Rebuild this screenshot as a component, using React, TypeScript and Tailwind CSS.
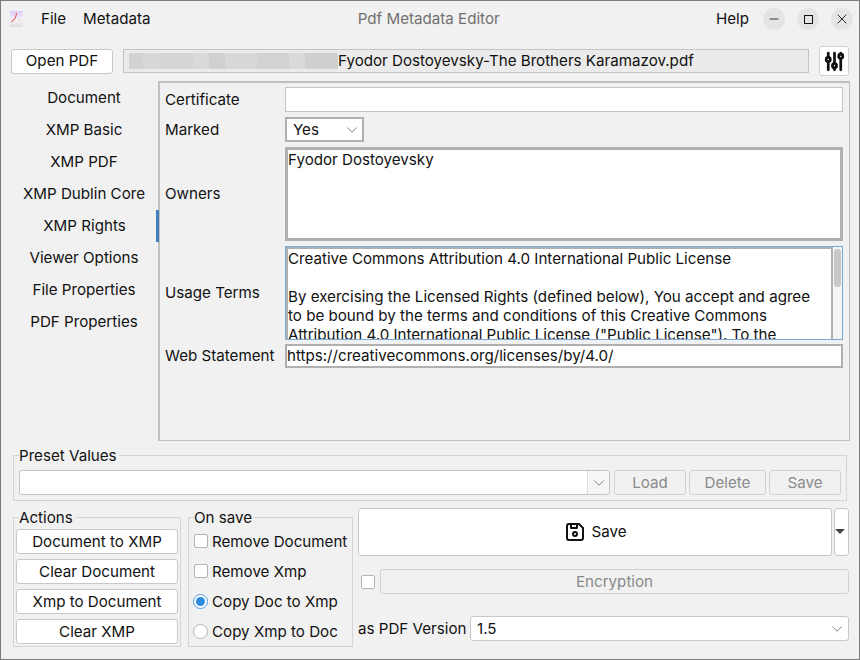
import React from "react";
import { TbAdjustments, TbDeviceFloppy } from "react-icons/tb";
import { ChevronDown, Minus, X } from "lucide-react";

const tabs = [
  "Document",
  "XMP Basic",
  "XMP PDF",
  "XMP Dublin Core",
  "XMP Rights",
  "Viewer Options",
  "File Properties",
  "PDF Properties",
];

const actions = ["Document to XMP", "Clear Document", "Xmp to Document", "Clear XMP"];

// blurred-out folder part of the path
const blurBlocks = [
  ["w-[14px]", "bg-[#d3d3d3]"],
  ["w-[18px]", "bg-[#d8d8d8]"],
  ["w-[32px]", "bg-[#d5d5d5]"],
  ["w-[16px]", "bg-[#dadada]"],
  ["w-[16px]", "bg-[#d0d0d0]"],
  ["w-[32px]", "bg-[#d8d8d8]"],
  ["w-[32px]", "bg-[#d2d2d2]"],
  ["w-[16px]", "bg-[#dadada]"],
  ["w-[33px]", "bg-[#cfcfcf]"],
];

const WinButton = ({ children }: { children: React.ReactNode }) => (
  <div className="flex h-[22px] w-[22px] items-center justify-center rounded-full bg-[#e4e4e4] text-[#1a1a1a]">
    {children}
  </div>
);

const PushButton = ({ label, className = "" }: { label: string; className?: string }) => (
  <button className={`flex h-[25px] items-center justify-center rounded-[3px] border border-[#c8c8c8] bg-white text-[#111] ${className}`}>
    {label}
  </button>
);

const DisabledButton = ({ label, className = "" }: { label: string; className?: string }) => (
  <button className={`flex h-[25px] items-center justify-center rounded-[3px] border border-[#d2d2d2] bg-[#f1f1f1] text-[#8a8a8a] ${className}`}>
    {label}
  </button>
);

const Check = ({ label }: { label: string }) => (
  <div className="flex h-[30px] items-center gap-[4px] pl-[5px]">
    <div className="h-[14px] w-[14px] rounded-[2px] border border-[#b4b4b4] bg-white" />
    <span className="mt-[2px] whitespace-nowrap">{label}</span>
  </div>
);

const Radio = ({ label, on }: { label: string; on?: boolean }) => (
  <div className="flex h-[30px] items-center gap-[4px] pl-[4px]">
    {on ? (
      <div className="flex h-[15px] w-[15px] items-center justify-center rounded-full border border-[#4a9ae0] bg-white">
        <div className="h-[9px] w-[9px] rounded-full bg-[#2f8ae0]" />
      </div>
    ) : (
      <div className="h-[15px] w-[15px] rounded-full border border-[#b4b4b4] bg-white" />
    )}
    <span className="mt-[2px] whitespace-nowrap">{label}</span>
  </div>
);

const FormRow = ({ label, children, className = "" }: { label: string; children: React.ReactNode; className?: string }) => (
  <div className={`flex items-center ${className}`}>
    <span className="w-[120px] shrink-0">{label}</span>
    {children}
  </div>
);

export default function App() {
  return (
    <div
      className="flex h-[660px] w-[860px] flex-col overflow-hidden border border-[#7c7c7c] bg-[#f1f1f1] text-[15.15px] leading-[20px] text-[#111]"
      style={{ fontFamily: 'Inter, "Noto Sans", sans-serif' }}
    >
      {/* title bar */}
      <div className="flex h-[36px] shrink-0 items-center pl-[9px] pr-[6px]">
        <svg width="14" height="17" viewBox="0 0 14 17" className="shrink-0">
          <defs>
            <linearGradient id="ic" x1="0" y1="0" x2="0" y2="1">
              <stop offset="0" stopColor="#dccbf5" />
              <stop offset="0.55" stopColor="#f6f2f8" />
              <stop offset="1" stopColor="#dfdfdc" />
            </linearGradient>
          </defs>
          <rect width="13" height="16" fill="url(#ic)" />
          <path d="M1.5 11 L3 9 L4.5 8.5 L6 5 L6.5 2" fill="none" stroke="#e0504f" strokeWidth="1" />
          <circle cx="9.5" cy="9" r="0.8" fill="#eeb070" />
        </svg>
        <span className="ml-[17px]">File</span>
        <span className="ml-[17px]">Metadata</span>
        <span className="flex-1 pr-[9px] text-center text-[#707070]">Pdf Metadata Editor</span>
        <span className="mr-[14px]">Help</span>
        <div className="flex gap-[12px]">
          <WinButton><Minus size={14} strokeWidth={1.5} /></WinButton>
          <WinButton><div className="h-[9px] w-[9px] border-[1.5px] border-[#111]" /></WinButton>
          <WinButton><X size={16} strokeWidth={1.4} /></WinButton>
        </div>
      </div>

      {/* file row */}
      <div className="mt-[9px] flex h-[30px] shrink-0 items-center pl-[10px] pr-[10px]">
        <PushButton label="Open PDF" className="h-[24px] w-[102px]" />
        <div className="ml-[10px] flex h-[24px] w-[686px] items-center border border-[#c4c4c4] bg-[#ebebeb] pl-[5px]">
          <div className="flex h-[16px] w-[209px] shrink-0">
            {blurBlocks.map(([w, c], i) => (
              <div key={i} className={`h-full ${w} ${c}`} />
            ))}
          </div>
          <span className="whitespace-nowrap">Fyodor Dostoyevsky-The Brothers Karamazov.pdf</span>
        </div>
        <button className="ml-[10px] flex h-[30px] w-[30px] items-center justify-center rounded-[3px] border border-[#d0d0d0] bg-white text-[#111]">
          <TbAdjustments size={25} strokeWidth={2.6} />
        </button>
      </div>

      {/* tabs + panel */}
      <div className="mt-[5px] flex h-[360px] shrink-0 pr-[9px]">
        <div className="flex w-[157px] shrink-0 flex-col pt-[1px]">
          {tabs.map((t) => (
            <div
              key={t}
              className={`flex h-[32px] items-center justify-center pl-[12px] ${t === "XMP Rights" ? "relative z-10 -mr-[1px] border-r-[3px] border-[#3f7fbf]" : "pr-[3px]"}`}
            >
              {t}
            </div>
          ))}
        </div>
        <div className="flex flex-1 flex-col border-t-2 border-l-2 border-r border-b border-[#c0c0c0] pl-[5px] pr-[6px] pt-[4px]">
          <FormRow label="Certificate" className="h-[25px]">
            <div className="h-full flex-1 border border-[#c4c4c4] bg-white" />
          </FormRow>
          <FormRow label="Marked" className="mt-[5px] h-[25px]">
            <div className="flex h-full w-[79px] items-center justify-between border-2 border-[#b0b0b0] bg-white pl-[6px] pr-[1px]">
              <span>Yes</span>
              <ChevronDown size={18} strokeWidth={1} className="text-[#555]" />
            </div>
          </FormRow>
          <FormRow label="Owners" className="mt-[5px] h-[94px]">
            <div className="h-full flex-1 border-[3px] border-[#b0b0b0] bg-white">Fyodor Dostoyevsky</div>
          </FormRow>
          <FormRow label="Usage Terms" className="mt-[5px] h-[94px]">
            <div className="flex h-full flex-1 border border-[#7aa9d6] bg-white">
              <div className="flex-1 overflow-hidden border-[2px] border-r-0 border-b-0 border-[#b0b0b0] leading-[19px]">
                <p>Creative Commons Attribution 4.0 International Public License</p>
                <p className="mt-[19px]">By exercising the Licensed Rights (defined below), You accept and agree</p>
                <p>to be bound by the terms and conditions of this Creative Commons</p>
                <p>Attribution 4.0 International Public License ("Public License"). To the</p>
              </div>
              <div className="w-[11px] shrink-0 border-l-[2px] border-[#b0b0b0] bg-[#f4f4f4] pl-[1px] pr-[1px] pt-[2px]">
                <div className="h-[38px] rounded-[3px] bg-[#c8c8c8]" />
              </div>
            </div>
          </FormRow>
          <FormRow label="Web Statement" className="mt-[4px] h-[24px]">
            <div className="flex h-full flex-1 items-center border-2 border-[#b0b0b0] bg-white">
              https://creativecommons.org/licenses/by/4.0/
            </div>
          </FormRow>
        </div>
      </div>

      {/* preset values */}
      <fieldset className="mx-[12px] mt-[3px] h-[57px] shrink-0 border border-[#d4d4d4] px-[5px]">
        <legend className="pr-[2px] pt-[2px] leading-[20px]">Preset Values</legend>
        <div className="mt-[4px] flex">
          <div className="flex h-[25px] w-[591px] justify-end rounded-[3px] border border-[#c4c4c4] bg-white">
            <div className="flex w-[22px] items-center justify-center rounded-r-[3px] border-l border-[#dcdcdc] bg-[#f6f6f6]">
              <ChevronDown size={18} strokeWidth={1} className="text-[#555]" />
            </div>
          </div>
          <DisabledButton label="Load" className="ml-[4px] w-[72px]" />
          <DisabledButton label="Delete" className="ml-[3px] w-[77px]" />
          <DisabledButton label="Save" className="ml-[3px] w-[72px]" />
        </div>
      </fieldset>

      {/* bottom */}
      <div className="mt-[5px] flex flex-1 pl-[12px] pr-[10px]">
        <fieldset className="h-[141px] w-[168px] shrink-0 border border-[#d4d4d4] px-[2px]">
          <legend className="ml-[3px] pr-[2px] pt-[2px] leading-[20px]">Actions</legend>
          <div className="mt-[1px] flex flex-col gap-[5px]">
            {actions.map((a) => (
              <PushButton key={a} label={a} className="w-[162px]" />
            ))}
          </div>
        </fieldset>
        <fieldset className="ml-[7px] h-[141px] w-[165px] shrink-0 border border-[#d4d4d4]">
          <legend className="ml-[5px] pr-[2px] pt-[2px] leading-[20px]">On save</legend>
          <div className="-mt-[2px] flex flex-col">
            <Check label="Remove Document" />
            <Check label="Remove Xmp" />
            <Radio label="Copy Doc to Xmp" on />
            <Radio label="Copy Xmp to Doc" />
          </div>
        </fieldset>
        <div className="ml-[5px] flex flex-1 flex-col pt-[2px]">
          <div className="flex h-[48px] gap-[2px]">
            <button className="flex flex-1 items-center justify-center gap-[4px] rounded-[3px] border border-[#c8c8c8] bg-white">
              <TbDeviceFloppy size={24} strokeWidth={2} />
              <span>Save</span>
            </button>
            <button className="flex w-[15px] shrink-0 items-center justify-center rounded-[3px] border border-[#c8c8c8] bg-white pb-[2px] pr-[3px]">
              <span className="h-0 w-0 border-x-[5px] border-t-[5px] border-x-transparent border-t-[#444]" />
            </button>
          </div>
          <div className="mt-[13px] flex h-[25px] items-center pl-[3px]">
            <div className="h-[14px] w-[14px] rounded-[2px] border border-[#b4b4b4] bg-white" />
            <DisabledButton label="Encryption" className="ml-[5px] flex-1" />
          </div>
          <div className="mt-[22px] flex h-[25px] items-center">
            <span className="w-[112px] shrink-0 whitespace-nowrap">as PDF Version</span>
            <div className="flex h-full flex-1 items-center justify-between rounded-[3px] border border-[#c8c8c8] bg-white pl-[6px] pr-[2px]">
              <span>1.5</span>
              <ChevronDown size={18} strokeWidth={1} className="text-[#555]" />
            </div>
          </div>
        </div>
      </div>
    </div>
  );
}
